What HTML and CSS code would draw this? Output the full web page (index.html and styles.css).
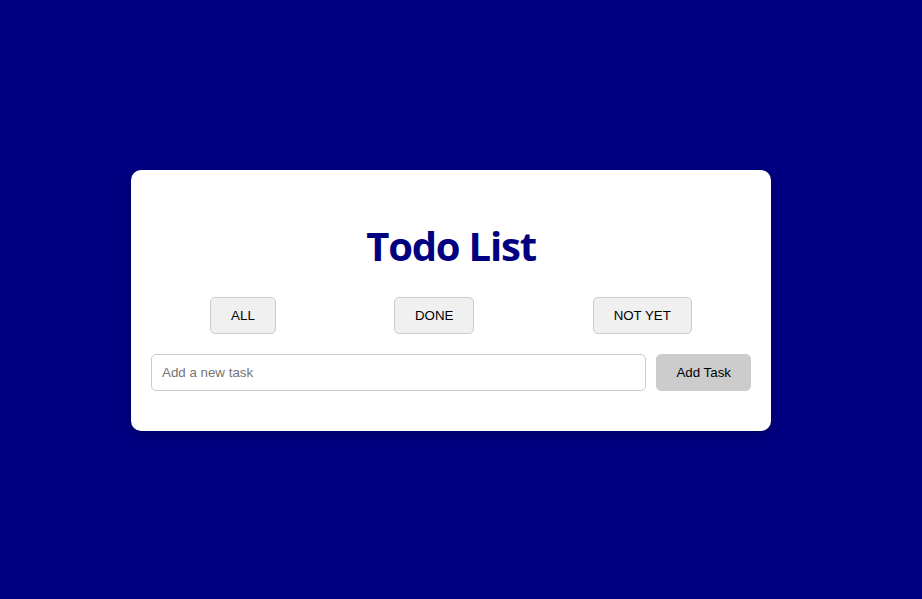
FILE: index.html
```html
<!DOCTYPE html>
<html>
<head>
<meta charset="utf-8">
<title>Todo List</title>
<link rel="stylesheet" href="styles.css">
</head>
<body>
<div class="stage">
  <div class="card">
    <h1 class="title">Todo List</h1>
    <div class="filters">
      <button class="filter-btn">ALL</button>
      <button class="filter-btn">DONE</button>
      <button class="filter-btn">NOT YET</button>
    </div>
    <div class="add-row">
      <input class="task-input" type="text" placeholder="Add a new task">
      <button class="add-btn">Add Task</button>
    </div>
  </div>
</div>
</body>
</html>
```

FILE: styles.css
```css
html, body {
  margin: 0;
  padding: 0;
  height: 100%;
}
body {
  background: #000080;
  font-family: "Liberation Sans", Arial, sans-serif;
}
.stage {
  height: 100%;
  display: flex;
  align-items: center;
  justify-content: center;
  padding: 2px 20px 0 0;
  box-sizing: border-box;
}
.card {
  width: 640px;
  box-sizing: border-box;
  background: #fff;
  border-radius: 10px;
  padding: 20px;
  box-shadow: 0 4px 10px rgba(0, 0, 0, 0.2);
}
.title {
  font-family: "Open Sans", "Noto Sans", sans-serif;
  font-weight: 700;
  font-size: 40px;
  letter-spacing: -1.2px;
  line-height: 54px;
  margin: 29px 0 24px;
  text-align: center;
  color: #000080;
}
.filters {
  display: flex;
  justify-content: space-around;
  margin-bottom: 20px;
}
.filter-btn {
  font-family: "Liberation Sans", Arial, sans-serif;
  font-size: 13.333px;
  line-height: 15px;
  padding: 10px 20px;
  border: 1px solid #ccc;
  border-radius: 5px;
  background: #f0f0f0;
  color: #000;
}
.add-row {
  display: flex;
  gap: 10px;
  margin-bottom: 20px;
}
.task-input {
  flex: 1;
  font-family: "Liberation Sans", Arial, sans-serif;
  font-size: 13.333px;
  line-height: 15px;
  padding: 10px;
  border: 1px solid #ccc;
  border-radius: 5px;
  outline: none;
}
.task-input::placeholder {
  color: #757575;
}
.add-btn {
  font-family: "Liberation Sans", Arial, sans-serif;
  font-size: 13.333px;
  line-height: 15px;
  padding: 10px 19px;
  border: 1px solid #ccc;
  border-radius: 5px;
  background: #ccc;
  color: #000;
}
```
